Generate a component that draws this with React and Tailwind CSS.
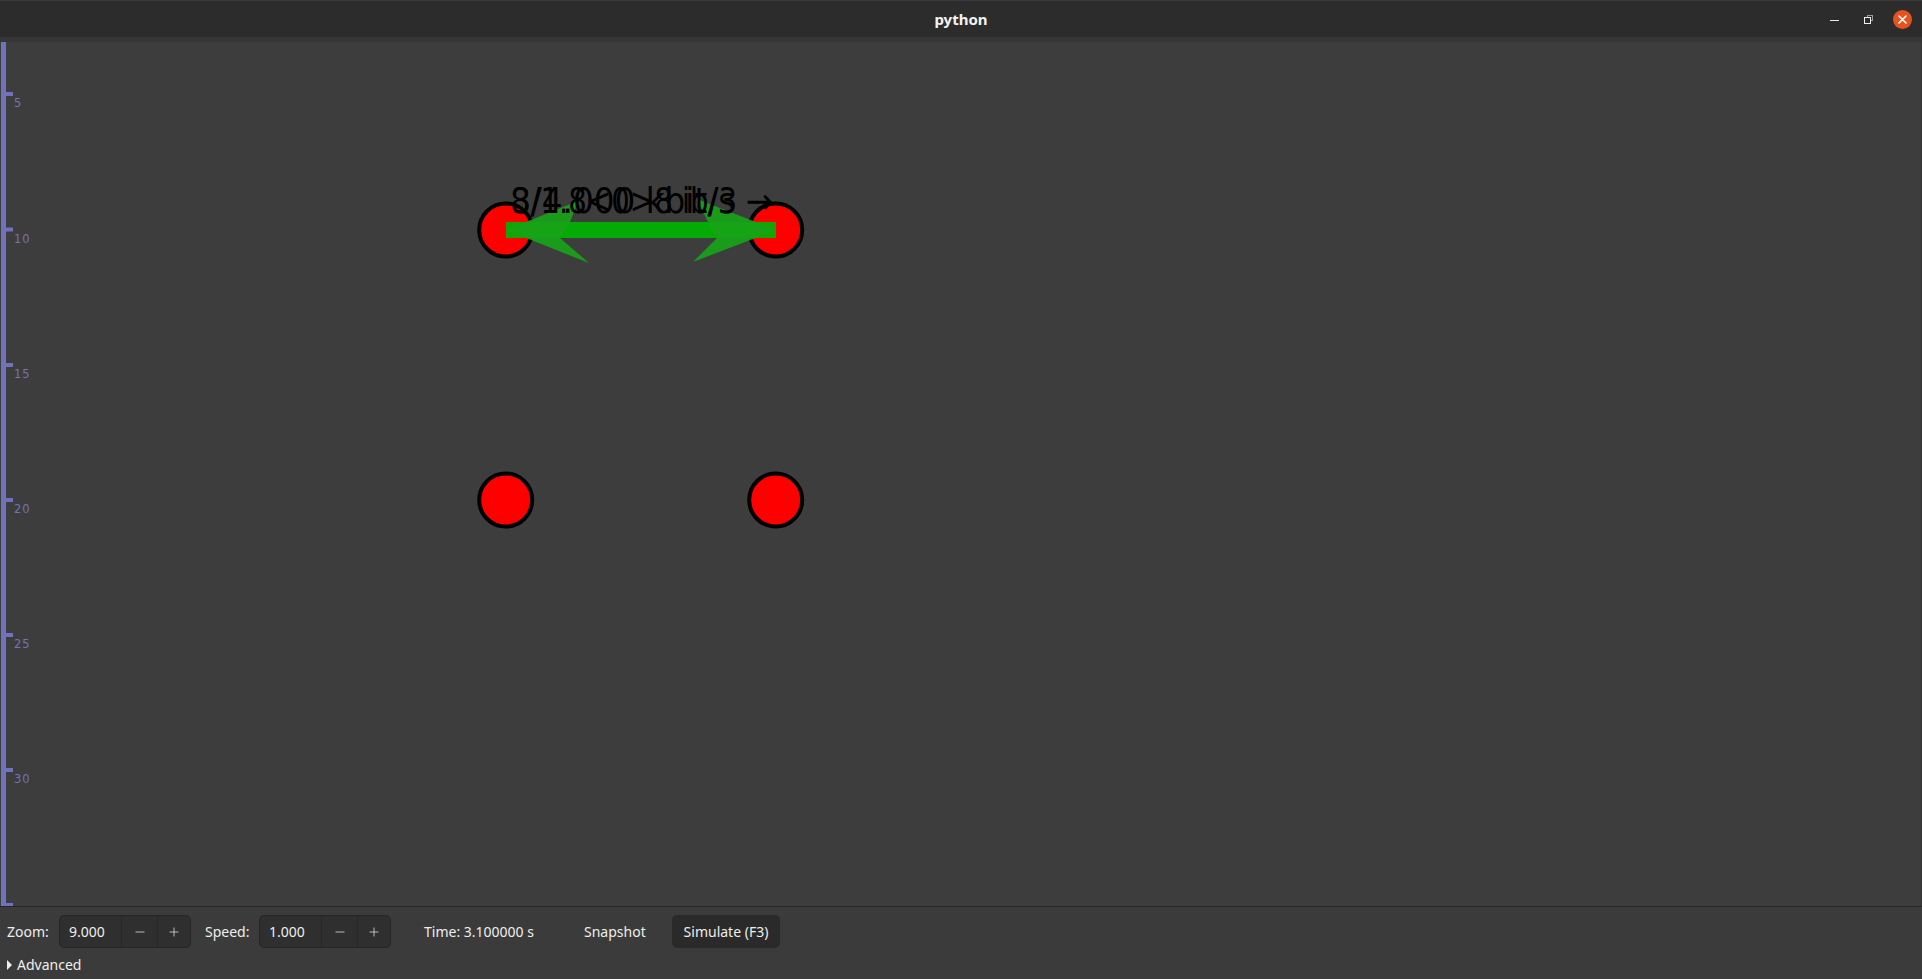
import { Minus, Plus } from 'lucide-react';

const ticks = [
    { label: "5", y: 52 },
    { label: "10", y: 187.5 },
    { label: "15", y: 323 },
    { label: "20", y: 458 },
    { label: "25", y: 593 },
    { label: "30", y: 728 },
];

const nodes = [
    { x: 505.7, y: 188 },
    { x: 775.7, y: 188 },
    { x: 505.7, y: 458 },
    { x: 775.7, y: 458 },
];

function TitleBar() {
    return (
        <div className="h-[37px] shrink-0 bg-[#2c2c2c] border-t border-[#3a3a3a] grid grid-cols-[1fr_auto_1fr] items-center">
            <div></div>
            <div className="text-[15px] font-bold text-[#f2f2f2]">python</div>
            <div className="flex items-center justify-end gap-0 pr-[10px]">
                <div className="w-[9px] h-[1.5px] bg-[#e8e8e8] mt-[3px]"></div>
                <div className="relative w-[9px] h-[9px] ml-[25px]">
                    <div className="absolute right-0 top-0 w-[6px] h-[6px] border border-[#9a9a9a]"></div>
                    <div className="absolute left-0 bottom-0 w-[7px] h-[7px] border border-[#f0f0f0] bg-[#2c2c2c]"></div>
                </div>
                <div className="ml-[20px] w-[19px] h-[19px] rounded-full bg-[#e6531f] flex items-center justify-center">
                    <svg width="9" height="9" viewBox="0 0 9 9">
                        <path d="M1 1 L8 8 M8 1 L1 8" stroke="#ffffff" strokeWidth="1.6" strokeLinecap="round" />
                    </svg>
                </div>
            </div>
        </div>
    );
}

function Canvas() {
    return (
        <div className="flex-1 min-h-0 bg-[#3d3d3d] border-r border-[#333333]">
            <svg className="block w-full h-full" width="1922" height="864">
                {/* ruler */}
                <rect x="1" y="0" width="5" height="864" fill="#7272bc" />
                <rect x="1" y="861" width="12" height="3" fill="#7272bc" />
                {ticks.map((t) => (
                    <g key={t.label}>
                        <rect x="6" y={t.y - 2} width="7" height="4" fill="#7272bc" />
                        <text x="14" y={t.y + 13} fontSize="11.5" letterSpacing="1" fill="#7373b6" fontFamily="DejaVu Sans, sans-serif">{t.label}</text>
                    </g>
                ))}

                {/* nodes */}
                {nodes.map((n, i) => (
                    <circle key={i} cx={n.x} cy={n.y} r="26.5" fill="#ff0000" stroke="#000000" strokeWidth="4" />
                ))}

                {/* link */}
                <rect x="506" y="180" width="270" height="16" fill="#00b400" opacity="0.92" />
                <polygon points="506,188 578,159 570,180 560,196 589,221" fill="#18a318" opacity="0.92" />
                <polygon points="776,188 697,157 708,180 717,196 693,220" fill="#18a318" opacity="0.92" />

                <text x="510" y="171" fontSize="35" fill="#000000" fontFamily="DejaVu Sans, sans-serif" textLength="263" lengthAdjust="spacingAndGlyphs">8/4.000 kbit/s →</text>
                <text x="512" y="171" fontSize="35" fill="#000000" fontFamily="DejaVu Sans, sans-serif" textLength="225" lengthAdjust="spacingAndGlyphs">3/1.8&lt;0&gt;8 ib/3</text>
            </svg>
        </div>
    );
}

function SpinButton({ value }) {
    return (
        <div className="flex h-[33px] w-[132px] rounded-[5px] border border-[#262626] bg-[#2f2f2f] overflow-hidden">
            <div className="w-[61px] flex items-center pl-[9px] text-[#eeeeec]">{value}</div>
            <div className="w-[36px] flex items-center justify-center border-l border-[#282828] text-[#dcdcdc]">
                <Minus size={14} strokeWidth={1.4} />
            </div>
            <div className="flex-1 flex items-center justify-center border-l border-[#282828] text-[#dcdcdc]">
                <Plus size={14} strokeWidth={1.4} />
            </div>
        </div>
    );
}

function BottomPanel() {
    return (
        <div className="h-[73px] shrink-0 bg-[#3b3b3b] border-t border-[#262626] flex flex-col text-[14px] text-[#eeeeec]">
            <div className="flex items-center mt-[8px] h-[33px] pl-[7px]">
                <span className="w-[52px]">Zoom:</span>
                <SpinButton value="9.000" />
                <span className="ml-[14px] w-[54px]">Speed:</span>
                <SpinButton value="1.000" />
                <span className="ml-[33px] w-[160px]">Time: 3.100000 s</span>
                <span className="w-[88px]">Snapshot</span>
                <button className="h-[33px] w-[108px] rounded-[5px] bg-[#2a2a2a] text-[#eeeeec]">Simulate (F3)</button>
            </div>
            <div className="flex items-center mt-[6px] pl-[7px] gap-[5px]">
                <svg width="5" height="10" viewBox="0 0 5 10">
                    <path d="M0 0 L5 5 L0 10 Z" fill="#eeeeec" />
                </svg>
                <span>Advanced</span>
            </div>
        </div>
    );
}

export default function App() {
    return (
        <div className="h-screen w-full flex flex-col overflow-hidden bg-[#3d3d3d] font-['Noto_Sans',sans-serif]">
            <TitleBar />
            <div className="h-[5px] shrink-0 bg-[#363636]"></div>
            <Canvas />
            <BottomPanel />
        </div>
    );
}
